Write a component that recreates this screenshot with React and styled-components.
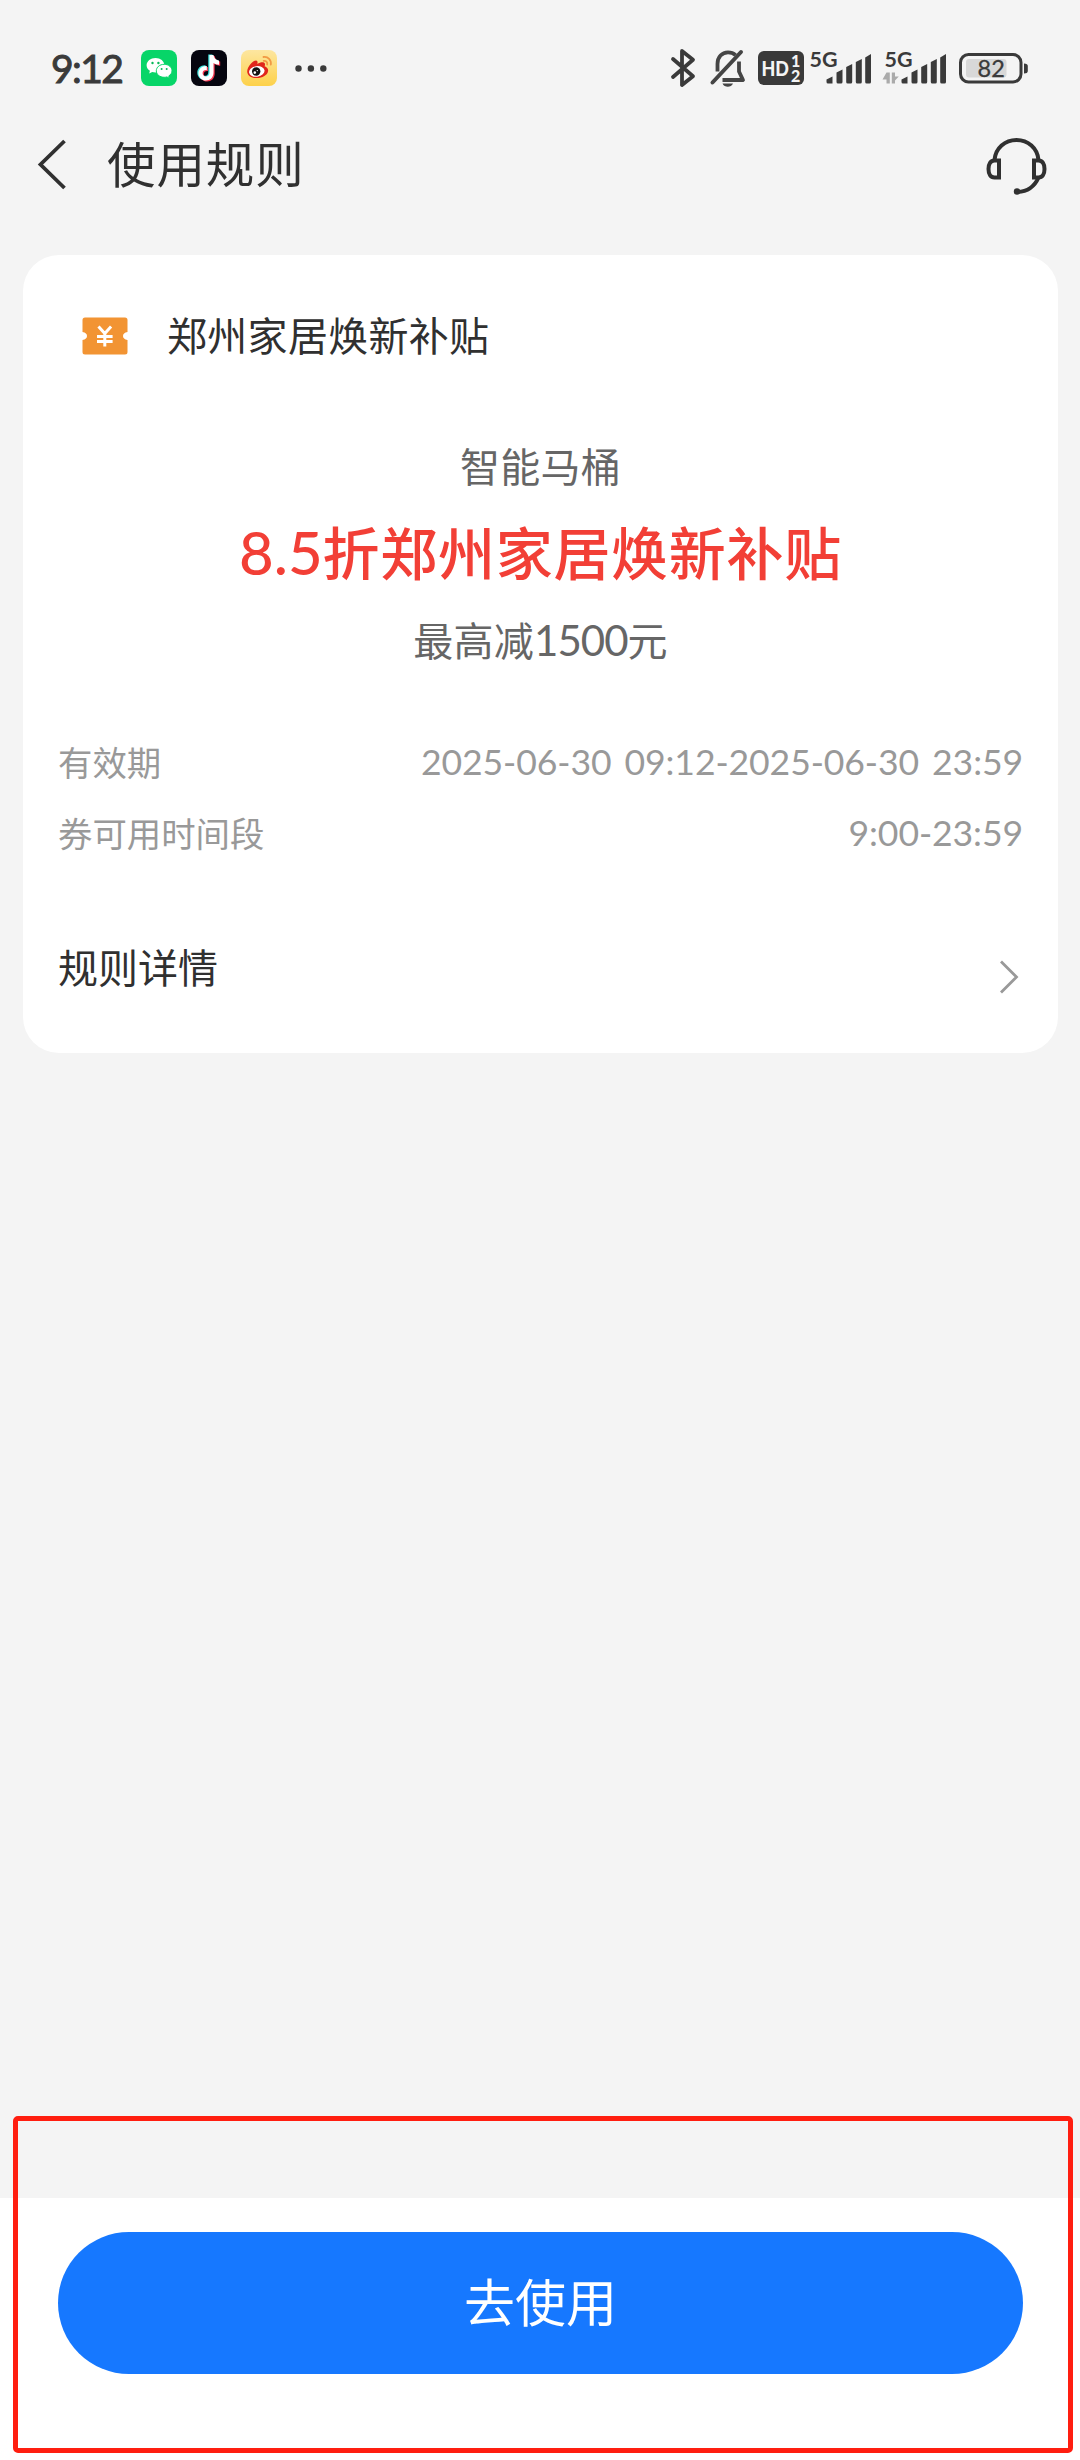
import React from 'react'
import styled, { createGlobalStyle } from 'styled-components'

const GlobalStyle = createGlobalStyle`
    * {
        box-sizing: border-box;
    }

    body {
        margin: 0;
        background: #f4f4f4;
        font-family: Lato, "Noto Sans CJK SC", sans-serif;
    }

    svg {
        display: block;
        flex-shrink: 0;
        overflow: visible;
    }
`

const Page = styled.div`
    position: relative;
    display: flex;
    flex-direction: column;
    width: 1080px;
    height: 2460px;
    overflow: hidden;
    background: #f4f4f4;
`

const StatusBar = styled.div`
    display: flex;
    justify-content: space-between;
    align-items: center;
    height: 96px;
    margin-top: 20px;
    padding: 0 51px 0 51px;
`

const StatusGroup = styled.div`
    display: flex;
    align-items: center;
    gap: ${({ $gap }) => $gap}px;
`

const Clock = styled.div`
    width: 76px;
    color: #3a3a3a;
    font-size: 39px;
    font-weight: 400;
    line-height: 48px;
    letter-spacing: -1.6px;
    white-space: nowrap;
    -webkit-text-stroke: 1px #3a3a3a;
`

const NavBar = styled.header`
    display: flex;
    align-items: center;
    height: 96px;
    padding: 0 33px 0 37px;
`

const NavTitle = styled.h1`
    flex: 1;
    margin: 0 0 0 40px;
    padding-bottom: 4px;
    color: #303030;
    font-family: "Noto Sans CJK SC", sans-serif;
    font-size: 48.5px;
    font-weight: 400;
    line-height: 60px;
    letter-spacing: 0.9px;
`

const Card = styled.section`
    display: flex;
    flex-direction: column;
    height: 798px;
    margin: 43px 22px 0 23px;
    padding: 51px 35px 0 35px;
    border-radius: 36px;
    background: #fff;
`

const CouponHead = styled.div`
    display: flex;
    align-items: center;
    gap: 39px;
    height: 60px;
    padding-left: 24px;
`

const CouponName = styled.h2`
    margin: 0;
    padding-bottom: 5px;
    color: #303030;
    font-family: "Noto Sans CJK SC", sans-serif;
    font-size: 40px;
    font-weight: 400;
    line-height: 60px;
    letter-spacing: 0.3px;
`

const Offer = styled.div`
    display: flex;
    flex-direction: column;
    align-items: center;
    margin-top: 71px;
`

const OfferNote = styled.div`
    color: #666;
    font-size: 40px;
    line-height: 60px;
    letter-spacing: 0.3px;
    white-space: nowrap;
`

const OfferTitle = styled.div`
    margin: 13px 0 15px;
    color: #f23f36;
    font-size: 57px;
    font-weight: 500;
    line-height: 86px;
    letter-spacing: 0.7px;
    white-space: nowrap;
`

const Num = styled.span`
    font-size: 1.05em;
    line-height: 1;
    letter-spacing: ${({ $spacing }) => $spacing || 0}px;
`

const Details = styled.dl`
    display: flex;
    flex-direction: column;
    gap: 11px;
    margin: 60px 0 0;
`

const DetailRow = styled.div`
    display: flex;
    justify-content: space-between;
    align-items: center;
    height: 60px;
    color: #999;
    font-size: 34.4px;
    line-height: 60px;
`

const DetailLabel = styled.dt`
    font-family: "Noto Sans CJK SC", sans-serif;
`

const DetailValue = styled.dd`
    margin: 0;
    padding-top: 2px;
    font-size: 35.6px;
    letter-spacing: -0.1px;
    word-spacing: 4px;
`

const RulesLink = styled.a`
    display: flex;
    justify-content: space-between;
    align-items: center;
    height: 60px;
    margin-top: 74px;
    color: #303030;
    font-family: "Noto Sans CJK SC", sans-serif;
    font-size: 40px;
    line-height: 60px;

    svg {
        margin: 22px 4px 0 0;
    }
`

const Footer = styled.footer`
    height: 262px;
    margin-top: auto;
    padding: 34px 57px 0 58px;
    background: #fff;
`

const UseButton = styled.button`
    display: flex;
    justify-content: center;
    align-items: center;
    width: 100%;
    height: 142px;
    padding: 0 0 6px;
    border: 0;
    border-radius: 71px;
    background: #1678ff;
    color: #fff;
    font-family: "Noto Sans CJK SC", sans-serif;
    font-size: 51px;
    line-height: 60px;
`

// red outline lying over the footer
const Highlight = styled.div`
    position: absolute;
    left: 12.5px;
    top: 2115.5px;
    width: 1060px;
    height: 337px;
    border: 5px solid #ff1e10;
    border-radius: 5px;
    pointer-events: none;
`

const WechatIcon = () => (
    <svg width="36" height="36" viewBox="0 0 36 36">
        <rect width="36" height="36" rx="8" fill="#07d568" />
        <path d="M14.5 8C9.600 8 5.600 11.200 5.600 15.200c0 2.300 1.300 4.300 3.300 5.600l-.7 2.600 3-1.500c1 .3 2.100.5 3.300.5 4.900 0 8.900-3.200 8.900-7.200S19.400 8 14.500 8z" fill="#fff" />
        <path d="M23.200 14.300c-4.400 0-7.900 2.900-7.900 6.500s3.500 6.500 7.900 6.500c1 0 1.900-.1 2.700-.4l2.600 1.400-.7-2.400c2-1.200 3.200-3 3.200-5.100 0-3.600-3.400-6.500-7.800-6.500z" fill="#fff" stroke="#07d568" strokeWidth="1" />
        <circle cx="11.500" cy="13" r="1.200" fill="#07b858" />
        <circle cx="17.400" cy="13" r="1.200" fill="#07b858" />
        <circle cx="20.600" cy="18.900" r="1" fill="#07b858" />
        <circle cx="25.700" cy="18.900" r="1" fill="#07b858" />
    </svg>
)

const NOTE = 'M18.500 5h4c.4 3 2.200 5.200 5.500 5.600v4.100c-2.100 0-3.900-.6-5.500-1.700v9.600c0 5-3.500 8-7.600 8s-7.400-3.200-7.400-7.300c0-4.500 3.600-7.700 8.300-7.300v4.200c-2.300-.5-4.200.9-4.200 3 0 1.900 1.500 3.200 3.300 3.200 2.200 0 3.600-1.400 3.600-3.900z'

const DouyinIcon = () => (
    <svg width="36" height="36" viewBox="0 0 36 36">
        <rect width="36" height="36" rx="8" fill="#05050f" />
        <path d={NOTE} fill="#3fe5e0" transform="translate(-1.200 -.6)" />
        <path d={NOTE} fill="#f5364f" transform="translate(1.200 1)" />
        <path d={NOTE} fill="#fff" />
    </svg>
)

const WeiboIcon = () => (
    <svg width="36" height="36" viewBox="0 0 36 36">
        <defs>
            <linearGradient id="weibo" x1="0" y1="0" x2="0" y2="1">
                <stop offset="0" stopColor="#fde6a0" />
                <stop offset="1" stopColor="#fdd14a" />
            </linearGradient>
        </defs>
        <rect width="36" height="36" rx="8" fill="url(#weibo)" />
        <path d="M15 10.500c1.700.1 1.800 1.900 1.300 3.400 2.600-1.600 6.300-2.400 7.400-.7.500.9.300 2-.1 3 2.300.8 3.800 2.500 3.500 4.800-.5 4.200-5.800 7.100-11.300 7.100S6.200 25.300 6.200 21.400c0-4.500 5.700-11 8.800-10.900z" fill="#e0261c" />
        <ellipse cx="15.800" cy="21.400" rx="7.800" ry="5.300" fill="#fff" transform="rotate(-8 15.800 21.400)" />
        <circle cx="15.200" cy="21.500" r="4.200" fill="#111" />
        <circle cx="13.800" cy="22.600" r="1.300" fill="#fff" />
        <circle cx="16.300" cy="20.600" r=".7" fill="#fff" />
        <path d="M22.500 7c4.500-.7 8.100 3 7.300 7.700M22.700 10.900c2.200-.3 3.900 1.300 3.500 3.600" fill="none" stroke="#f19a45" strokeWidth="1.800" strokeLinecap="round" />
    </svg>
)

const MoreDots = () => (
    <svg width="36" height="8" viewBox="-4 0 36 8">
        <circle cx="3.500" cy="4.500" r="3.200" fill="#3a3a3a" />
        <circle cx="15.900" cy="4.500" r="3.200" fill="#3a3a3a" />
        <circle cx="28.300" cy="4.500" r="3.200" fill="#3a3a3a" />
    </svg>
)

const BluetoothIcon = () => (
    <svg width="26" height="40" viewBox="0 0 26 40" fill="none" stroke="#3a3a3a" strokeWidth="3.800" strokeLinejoin="round" strokeLinecap="round">
        <path d="M3 11l20 17.200L12 37V3l11 8.800L3 29" />
    </svg>
)

const MutedIcon = () => (
    <svg width="36" height="40" viewBox="0 0 36 40" fill="none" stroke="#454545" strokeWidth="3.800">
        <path d="M7.500 23.500V16C7.500 9 12 4.400 18 4.400c3 0 5.600 1 7.500 2.800" />
        <path d="M29 13.500v10l4 8.500H12.500" strokeLinejoin="round" />
        <path d="M31 4L2.500 34.500" strokeLinecap="round" strokeWidth="4" />
        <path d="M12.500 35.500h10.500c-1 2.300-3 3.200-5.200 3.200s-4.400-.9-5.300-3.200z" fill="#454545" stroke="none" />
    </svg>
)

const HdIcon = () => (
    <svg width="46" height="34" viewBox="0 0 46 34" fontFamily="Lato, sans-serif" fontWeight="900" fill="#f4f4f4">
        <rect width="46" height="34" rx="6" fill="#3a3a3a" />
        <text x="3.500" y="24.500" fontSize="20.500" textLength="27.500" lengthAdjust="spacingAndGlyphs">HD</text>
        <text x="33" y="16" fontSize="16">1</text>
        <text x="33" y="30.500" fontSize="16">2</text>
    </svg>
)

const SignalIcon = ({ data }) => (
    <svg width="64" height="36" viewBox="0 0 64 36">
        <text x="1.500" y="17" fontFamily="Lato, sans-serif" fontWeight="700" fontSize="21" fill="#3a3a3a" textLength="28" lengthAdjust="spacingAndGlyphs">5G</text>
        <g fill="#3a3a3a">
            <path d="M18.500 29.500l6-3v7h-4.500q-1.500 0-1.500-1.500z" />
            <path d="M28.500 22.500l6-3V32q0 1.500-1.500 1.500h-3q-1.500 0-1.500-1.500z" />
            <path d="M38.200 17l6-3v18q0 1.500-1.500 1.500h-3q-1.500 0-1.500-1.500z" />
            <path d="M47.800 12l6-3v23q0 1.500-1.500 1.500h-3q-1.500 0-1.500-1.500z" />
            <path d="M57.200 7.500l5.800-3.500v28q0 1.500-1.500 1.500h-2.800q-1.500 0-1.500-1.500z" />
        </g>
        {data && (
            <g fill="#aaa">
                <path d="M3.500 22.500h3.300v11H3.500v-4H-.5z" />
                <path d="M8.800 22.500h3.200v4h3.800l-3.800 4v3H8.800z" />
            </g>
        )}
    </svg>
)

const BatteryIcon = () => (
    <svg width="70" height="32" viewBox="0 0 70 32">
        <rect x="1.500" y="2.500" width="60.500" height="27.500" rx="8" fill="none" stroke="#3a3a3a" strokeWidth="3" />
        <rect x="7" y="7" width="40.500" height="18.500" rx="3" fill="#d8d8d8" />
        <path d="M65 11.500q3.800 0 3.800 2.500v5q0 2.500-3.800 2.500z" fill="#3a3a3a" />
        <text x="18.500" y="24.700" fontFamily="Lato, sans-serif" fontSize="23.500" fill="#3a3a3a" stroke="#3a3a3a" strokeWidth=".3">82</text>
    </svg>
)

const BackIcon = () => (
    <svg width="30" height="50" viewBox="0 0 30 50" fill="none" stroke="#303030" strokeWidth="3.800">
        <path d="M27.500 2L3.500 25.500 27.500 49" />
    </svg>
)

const HeadsetIcon = () => (
    <svg width="61" height="58" viewBox="0 -2 61 58" fill="none" stroke="#303030" strokeWidth="4">
        <path d="M8.500 23C9.500 11 19 3 30.500 3s21 8 22 20" />
        <path d="M13 23.500v17H8.500C4.500 40.500 2.500 37 2.500 32s2-8.500 6-8.500z" />
        <path d="M48 23.500v17h4.500c4 0 6-3.500 6-8.500s-2-8.500-6-8.500z" />
        <path d="M52.500 40.500c-3.500 8-10 14-21 14.500" />
        <circle cx="31" cy="54.500" r="3.200" fill="#303030" stroke="none" />
    </svg>
)

const CouponIcon = () => (
    <svg width="46" height="38" viewBox="0 0 46 38">
        <path d="M3 .5h40q2.500 0 2.500 2.500v12q-4.500.8-4.500 4t4.500 4v12q0 2.500-2.500 2.500H3Q.5 37.500.5 35V23q4.500-.8 4.500-4t-4.500-4V3Q.5.500 3 .5z" fill="#f29433" />
        <path d="M16.500 9.500l6.300 7 6.300-7M15 19.500h15.600M15 24.500h15.600M22.800 16v13.500" fill="none" stroke="#fff" strokeWidth="3" />
    </svg>
)

const ChevronIcon = () => (
    <svg width="20" height="34" viewBox="0 0 20 34" fill="none" stroke="#999" strokeWidth="2.800">
        <path d="M2 1.500L17.500 17 2 32.500" />
    </svg>
)

const details = [
    { label: '有效期', value: '2025-06-30 09:12-2025-06-30 23:59' },
    { label: '券可用时间段', value: '9:00-23:59' },
]

export default function App() {
    return (
        <Page>
            <GlobalStyle />
            <StatusBar>
                <StatusGroup $gap={14}>
                    <Clock>9:12</Clock>
                    <WechatIcon />
                    <DouyinIcon />
                    <WeiboIcon />
                    <MoreDots />
                </StatusGroup>
                <StatusGroup $gap={12}>
                    <StatusGroup $gap={14}>
                        <BluetoothIcon />
                        <MutedIcon />
                    </StatusGroup>
                    <StatusGroup $gap={4}>
                        <HdIcon />
                        <StatusGroup $gap={11}>
                            <SignalIcon />
                            <SignalIcon data />
                        </StatusGroup>
                    </StatusGroup>
                    <BatteryIcon />
                </StatusGroup>
            </StatusBar>
            <NavBar>
                <BackIcon />
                <NavTitle>使用规则</NavTitle>
                <HeadsetIcon />
            </NavBar>
            <Card>
                <CouponHead>
                    <CouponIcon />
                    <CouponName>郑州家居焕新补贴</CouponName>
                </CouponHead>
                <Offer>
                    <OfferNote>智能马桶</OfferNote>
                    <OfferTitle><Num>8.5</Num>折郑州家居焕新补贴</OfferTitle>
                    <OfferNote>最高减<Num $spacing={-1}>1500</Num>元</OfferNote>
                </Offer>
                <Details>
                    {details.map(({ label, value }) => (
                        <DetailRow key={label}>
                            <DetailLabel>{label}</DetailLabel>
                            <DetailValue>{value}</DetailValue>
                        </DetailRow>
                    ))}
                </Details>
                <RulesLink>
                    规则详情
                    <ChevronIcon />
                </RulesLink>
            </Card>
            <Footer>
                <UseButton>去使用</UseButton>
            </Footer>
            <Highlight />
        </Page>
    )
}
